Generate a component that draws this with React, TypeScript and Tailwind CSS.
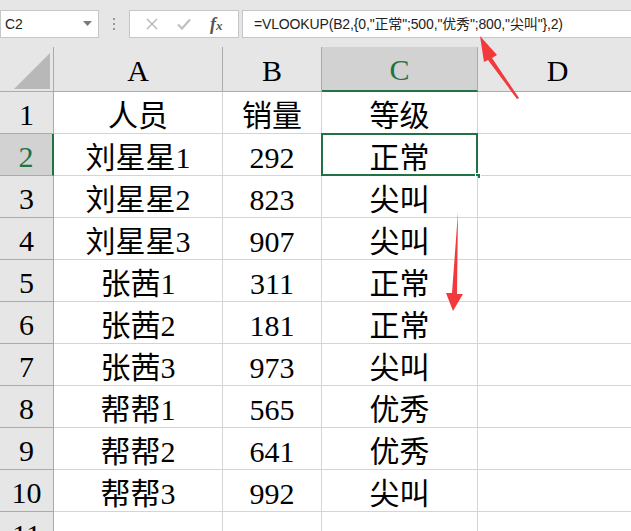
import React from 'react';

const rows = [
  ['人员', '销量', '等级'],
  ['刘星星1', '292', '正常'],
  ['刘星星2', '823', '尖叫'],
  ['刘星星3', '907', '尖叫'],
  ['张茜1', '311', '正常'],
  ['张茜2', '181', '正常'],
  ['张茜3', '973', '尖叫'],
  ['帮帮1', '565', '优秀'],
  ['帮帮2', '641', '优秀'],
  ['帮帮3', '992', '尖叫'],
];

const cellFont = { fontFamily: '"Liberation Serif", "Noto Sans CJK SC", serif' };

const App: React.FC = () => {
  return (
    <div className="relative w-[631px] h-[531px] overflow-hidden bg-[#e6e6e6]" style={cellFont}>
      {/* Formula bar */}
      <div className="h-[47px] flex items-start pt-[10px]" style={{ fontFamily: '"Liberation Sans", "Noto Sans CJK SC", sans-serif' }}>
        <div className="w-[99px] h-[28px] bg-white border border-[#c6c6c6] flex items-center justify-between pl-[4px] pr-[6px] text-[14px] text-[#222]">
          <span>C2</span>
          <svg width="9" height="6" viewBox="0 0 9 6"><path d="M0 0h9L4.5 5z" fill="#7a7a7a" /></svg>
        </div>
        <div className="w-[30px] h-[28px] flex flex-col items-center justify-center gap-[3px]">
          <span className="w-[2px] h-[2px] bg-[#9a9a9a]" />
          <span className="w-[2px] h-[2px] bg-[#9a9a9a]" />
          <span className="w-[2px] h-[2px] bg-[#9a9a9a]" />
        </div>
        <div className="w-[110px] h-[28px] bg-white border border-[#c6c6c6] flex items-center justify-around px-[6px]">
          <svg width="12" height="12" viewBox="0 0 12 12"><path d="M1 1l10 10M11 1L1 11" stroke="#b5b5b5" strokeWidth="1.4" /></svg>
          <svg width="14" height="12" viewBox="0 0 14 12"><path d="M1 6.5l4 4L13 1.5" stroke="#c0c0c0" strokeWidth="2.2" fill="none" /></svg>
          <span className="text-[18px] italic font-bold text-[#555] leading-none" style={{ fontFamily: '"Liberation Serif", serif' }}>f<span className="text-[13px]">x</span></span>
        </div>
        <div className="ml-[3px] flex-1 h-[28px] bg-white border border-[#c6c6c6] border-r-0 flex items-center pl-[11px] text-[14px] tracking-[-0.15px] text-[#222] whitespace-nowrap">
          =VLOOKUP(B2,{'{'}0,"正常";500,"优秀";800,"尖叫"{'}'},2)
        </div>
      </div>

      {/* Sheet */}
      <div className="grid grid-cols-[54px_169px_99px_156px_160px]">
        {/* header row */}
        <div className="h-[45px] bg-[#e6e6e6] border-r border-b border-[#ababab] relative">
          <svg className="absolute left-[14px] top-[6px]" width="36" height="36" viewBox="0 0 36 36"><path d="M36 0V36H0z" fill="#b8b8b8" /></svg>
        </div>
        {['A', 'B', 'C', 'D'].map((c) => (
          <div
            key={c}
            className={
              c === 'C'
                ? 'h-[45px] bg-[#d2d2d2] border-r border-[#ababab] border-b-2 border-b-[#217346] flex items-center justify-center pt-[2px] text-[30px] text-[#217346]'
                : 'h-[45px] bg-[#e6e6e6] border-r border-b border-[#ababab] flex items-center justify-center pt-[2px] text-[30px] text-black'
            }
          >
            {c}
          </div>
        ))}

        {rows.map((r, i) => (
          <React.Fragment key={i}>
            <div
              className={
                i === 1
                  ? 'h-[42px] bg-[#d2d2d2] border-r-2 border-r-[#217346] border-b border-b-[#ababab] flex items-center justify-center pt-[3px] text-[30px] text-[#217346]'
                  : 'h-[42px] bg-[#e6e6e6] border-r border-b border-[#ababab] flex items-center justify-center pt-[3px] text-[30px] text-black'
              }
            >
              {i + 1}
            </div>
            {r.map((v, j) => (
              <div
                key={j}
                className="relative h-[42px] bg-white border-r border-b border-[#d4d4d4] flex items-center justify-center pt-[5px] text-[30px] text-black"
              >
                {v}
                {i === 1 && j === 2 && (
                  <>
                    <span className="absolute -left-px -top-px -right-px -bottom-px border-2 border-[#217346]" />
                    <span className="absolute -right-[4px] -bottom-[4px] w-[6px] h-[6px] bg-[#217346] border border-white" />
                  </>
                )}
              </div>
            ))}
            <div className="h-[42px] bg-white border-b border-[#d4d4d4]" />
          </React.Fragment>
        ))}

        <div className="h-[42px] bg-[#e6e6e6] border-r border-[#ababab] flex items-center justify-center pt-[3px] text-[30px] text-black">11</div>
        <div className="h-[42px] bg-white border-r border-[#d4d4d4]" />
        <div className="h-[42px] bg-white border-r border-[#d4d4d4]" />
        <div className="h-[42px] bg-white border-r border-[#d4d4d4]" />
        <div className="h-[42px] bg-white" />
      </div>

      {/* annotation arrows */}
      <svg className="absolute left-0 top-0 pointer-events-none" width="631" height="531" viewBox="0 0 631 531">
        <path d="M519 98L492 58L497 55L480 36L484 62L488 60L517 99z" fill="#f23a3c" />
        <path d="M458 212L457 294L463 294L453 311L446 293L452 293z" fill="#f23a3c" />
      </svg>
    </div>
  );
};

export default App;
